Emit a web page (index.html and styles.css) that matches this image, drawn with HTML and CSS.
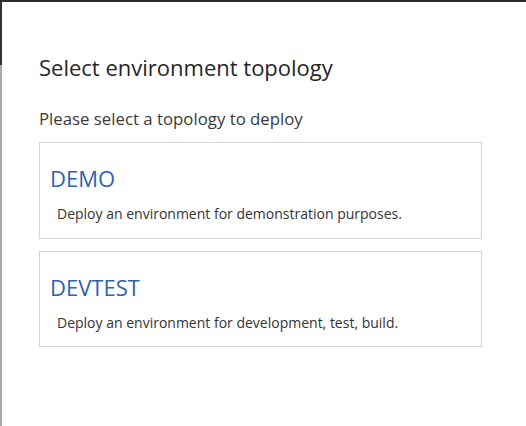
FILE: index.html
```html
<!DOCTYPE html>
<html lang="en">
<head>
    <meta charset="utf-8">
    <title>Select environment topology</title>
    <link rel="stylesheet" href="styles.css">
</head>
<body>
<div class="topbar"></div>
<div class="frame">
    <div class="edge"><i class="edge-dark"></i><i class="edge-light"></i></div>
    <div class="dialog">
        <h1 class="dialog-title">Select environment topology</h1>
        <p class="dialog-hint">Please select a topology to deploy</p>
        <div class="topology">
            <div class="topology-name">DEMO</div>
            <div class="topology-desc">Deploy an environment for demonstration purposes.</div>
        </div>
        <div class="topology">
            <div class="topology-name">DEVTEST</div>
            <div class="topology-desc">Deploy an environment for development, test, build.</div>
        </div>
    </div>
</div>
</body>
</html>
```

FILE: styles.css
```css
* {
    margin: 0px;
    padding: 0px;
    box-sizing: border-box;
}

html, body {
    height: 100%;
}

body {
    display: flex;
    flex-direction: column;
    background-color: #fff;
    font-family: 'Open Sans', 'Noto Sans', sans-serif;
    color: #333;
}

.topbar {
    height: 2px;
    background-color: #2d2d2d;
}

.frame {
    flex: 1;
    display: flex;
}

.edge {
    width: 2px;
    display: flex;
    flex-direction: column;
}

.edge-dark {
    height: 63px;
    background-color: #333;
}

.edge-light {
    flex: 1;
    background-color: #a8a8a8;
}

.dialog {
    flex: 1;
    padding: 51px 44px 0 37px;
}

.dialog-title {
    font-size: 22px;
    font-weight: 400;
    line-height: 28px;
    color: #262626;
}

.dialog-hint {
    margin-top: 27px;
    font-size: 16.8px;
    line-height: 22px;
    color: #3a3a3a;
}

.topology {
    margin-top: 12px;
    height: 97px;
    padding: 21px 10px 0 10px;
    border: 1px solid #d4d4d4;
}

.topology + .topology {
    margin-top: 12px;
    height: 96px;
}

.topology-name {
    font-size: 22px;
    line-height: 28px;
    color: #2f62ae;
}

.topology-desc {
    margin-top: 13px;
    padding-left: 7px;
    font-size: 14px;
    line-height: 18px;
    color: #333;
}
```
